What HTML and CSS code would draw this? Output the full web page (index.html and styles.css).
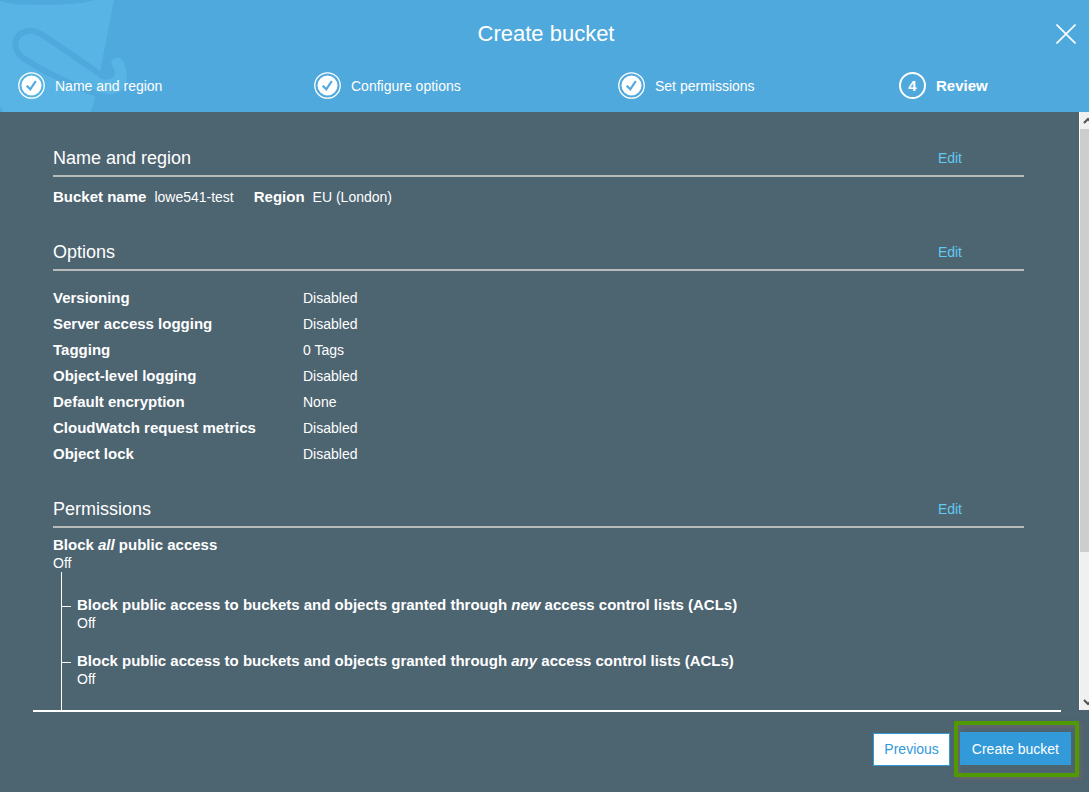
FILE: index.html
```html
<!DOCTYPE html>
<html lang="en">
<head>
<meta charset="utf-8">
<meta name="viewport" content="width=device-width, initial-scale=1">
<title>Create bucket</title>
<link rel="stylesheet" href="styles.css">
</head>
<body>
<header class="header">
  <svg class="bucket" viewBox="0 0 130 112" aria-hidden="true">
    <path class="bucket-body" d="M0 0H114L94 103Q92 109 90 112H4Q1 110 0 106Z"/>
    <path class="bucket-rim" d="M0 0H94C84 4 60 5 42 5C23 5 8 4 0 1Z"/>
    <path class="bucket-handle" d="M98 94C75 87 43 71 23 58C14 51 13 41 20 34C26 30 34 30 41 34C60 46 82 62 103 76"/>
    <path class="bucket-body" d="M111 63C113 57 119 55 123 61C130 76 128 91 113 94C107 95 102 93 96 91L97 77C108 82 115 79 115 73C115 69 113 67 111 63Z"/>
  </svg>
  <div class="title-bar">
    <h1 class="title">Create bucket</h1>
    <button class="close" type="button" aria-label="Close">
      <svg width="20" height="20" viewBox="0 0 20 20"><path d="M.5.5l19 19M19.5.5l-19 19"/></svg>
    </button>
  </div>
  <ol class="steps">
    <li class="step"><svg class="badge" viewBox="0 0 27 27"><circle class="ring" cx="13.5" cy="13.5" r="12.7"/><circle class="disc" cx="13.5" cy="13.5" r="10"/><path class="tick" d="M8.7 13.7l3.6 3.6L17.8 9"/></svg>Name and region</li>
    <li class="step"><svg class="badge" viewBox="0 0 27 27"><circle class="ring" cx="13.5" cy="13.5" r="12.7"/><circle class="disc" cx="13.5" cy="13.5" r="10"/><path class="tick" d="M8.7 13.7l3.6 3.6L17.8 9"/></svg>Configure options</li>
    <li class="step"><svg class="badge" viewBox="0 0 27 27"><circle class="ring" cx="13.5" cy="13.5" r="12.7"/><circle class="disc" cx="13.5" cy="13.5" r="10"/><path class="tick" d="M8.7 13.7l3.6 3.6L17.8 9"/></svg>Set permissions</li>
    <li class="step current" aria-current="step"><span class="number">4</span>Review</li>
  </ol>
</header>

<div class="body">
  <main class="review">
    <section>
      <div class="section-head"><h2>Name and region</h2><a href="#name">Edit</a></div>
      <dl class="pairs">
        <div><dt>Bucket name</dt><dd>lowe541-test</dd></div>
        <div><dt>Region</dt><dd>EU (London)</dd></div>
      </dl>
    </section>
    <section>
      <div class="section-head"><h2>Options</h2><a href="#options">Edit</a></div>
      <dl class="options">
        <dt>Versioning</dt><dd>Disabled</dd>
        <dt>Server access logging</dt><dd>Disabled</dd>
        <dt>Tagging</dt><dd>0 Tags</dd>
        <dt>Object-level logging</dt><dd>Disabled</dd>
        <dt>Default encryption</dt><dd>None</dd>
        <dt>CloudWatch request metrics</dt><dd>Disabled</dd>
        <dt>Object lock</dt><dd>Disabled</dd>
      </dl>
    </section>
    <section class="permissions">
      <div class="section-head"><h2>Permissions</h2><a href="#permissions">Edit</a></div>
      <div class="block-all"><strong>Block <em>all</em> public access</strong><span>Off</span></div>
      <ul class="tree">
        <li><strong>Block public access to buckets and objects granted through <em>new</em> access control lists (ACLs)</strong><span>Off</span></li>
        <li><strong>Block public access to buckets and objects granted through <em>any</em> access control lists (ACLs)</strong><span>Off</span></li>
      </ul>
    </section>
  </main>
  <div class="scrollbar" aria-hidden="true">
    <svg class="arrow" width="9" height="17" viewBox="0 0 9 17"><path d="M4 11l4-4 4 4"/></svg>
    <div class="track"><div class="thumb"></div></div>
    <svg class="arrow" width="9" height="17" viewBox="0 0 9 17"><path d="M4 7l4 4 4-4"/></svg>
  </div>
</div>

<footer class="footer">
  <div class="actions">
    <button class="btn previous" type="button">Previous</button>
    <div class="highlight"><button class="btn create" type="button">Create bucket</button></div>
  </div>
</footer>
</body>
</html>
```
FILE: styles.css
```css
* { box-sizing: border-box; }

body {
  display: flex;
  flex-direction: column;
  height: 100vh;
  margin: 0;
  background: #4d6471;
  color: #fff;
  font: 14px/18px "Liberation Sans", Arial, sans-serif;
}

h1, h2, dl, dd, ol, ul { margin: 0; padding: 0; font-weight: normal; list-style: none; }

.header { position: relative; flex: none; padding: 18px 0 13px 18px; background: #4fa9dd; }
.bucket { position: absolute; top: 0; left: 0; width: 130px; height: 112px; }
.bucket-body { fill: #57b4e4; }
.bucket-rim { fill: #4fa9dd; }
.bucket-handle { fill: none; stroke: #4fa9dd; stroke-width: 6; }

.title-bar { position: relative; display: flex; align-items: center; padding: 0 13px 0 18px; }
.title { flex: 1; font-size: 22px; line-height: 32px; text-align: center; }
.close { display: flex; padding: 0; border: 0; background: none; }
.close path { fill: none; stroke: #fff; stroke-width: 1.6; }

.steps { position: relative; display: grid; grid-template-columns: 296fr 304fr 281fr 190fr; margin-top: 22px; }
.step { display: flex; align-items: center; gap: 10px; }
.current, dt, strong { font-size: 15px; font-weight: bold; }
.badge { width: 27px; height: 27px; }
.ring { fill: none; stroke: #fff; stroke-width: 1.3; }
.disc { fill: #fff; }
.tick { fill: none; stroke: #4fa9dd; stroke-width: 2.2; }
.number {
  display: flex;
  align-items: center;
  justify-content: center;
  width: 27px;
  height: 27px;
  border: 2px solid #fff;
  border-radius: 50%;
}

.body { display: flex; flex: 1; min-height: 0; }
.review { display: flex; flex: 1; flex-direction: column; padding: 34px 55px 0 53px; overflow: hidden; }
.section-head {
  display: flex;
  justify-content: space-between;
  align-items: center;
  padding: 0 62px 5px 0;
  border-bottom: 2px solid #b9bbbb;
}
.section-head h2 { font-size: 18px; line-height: 24px; }
.section-head a { color: #62c9f0; text-decoration: none; }

.pairs { display: flex; gap: 20px; padding: 11px 0 34px; }
.pairs div { display: flex; gap: 8px; }
.options { display: grid; grid-template-columns: 250px 1fr; padding: 14px 0 30px; line-height: 26px; }

.permissions { display: flex; flex: 1; flex-direction: column; min-height: 0; }
.block-all { padding-top: 8px; }
.block-all strong, .block-all span, .tree strong, .tree span { display: block; }
.tree { flex: 1; margin-left: 8px; padding-top: 24px; border-left: 1px solid #fff; }
.tree li { display: grid; grid-template-columns: 9px 1fr; column-gap: 6px; margin-bottom: 20px; }
.tree li::before { content: ""; height: 1px; margin-top: 10px; background: #fff; }
.tree span { grid-column: 2; }

.scrollbar {
  display: flex;
  flex-direction: column;
  width: 10px;
  border-left: 1px solid #fff;
  background: #f0f0f0;
  overflow: hidden;
}
.arrow { flex: none; }
.arrow path { fill: none; stroke: #505050; stroke-width: 2; }
.track { flex: 1; }
.thumb { height: 75%; background: #cdcdcd; }

.footer { flex: none; }
.footer::before { content: ""; display: block; height: 2px; margin: 0 28px 0 33px; background: #fff; }
.actions { display: flex; justify-content: flex-end; align-items: center; gap: 4px; padding: 9px 10px 15px; }
.btn { height: 33px; padding: 0 10px; border: 1px solid #329ad9; font: inherit; white-space: nowrap; }
.previous { background: #fff; color: #329ad9; }
.create { padding: 0 11px; background: #329ad9; color: #fff; }
.highlight {
  display: flex;
  padding: 7px 4px 8px 2px;
  border: 4px solid #4e9a00;
  box-shadow: 2px 2px 4px #6b6668, inset 2px 2px 4px #6b6668;
}
```
